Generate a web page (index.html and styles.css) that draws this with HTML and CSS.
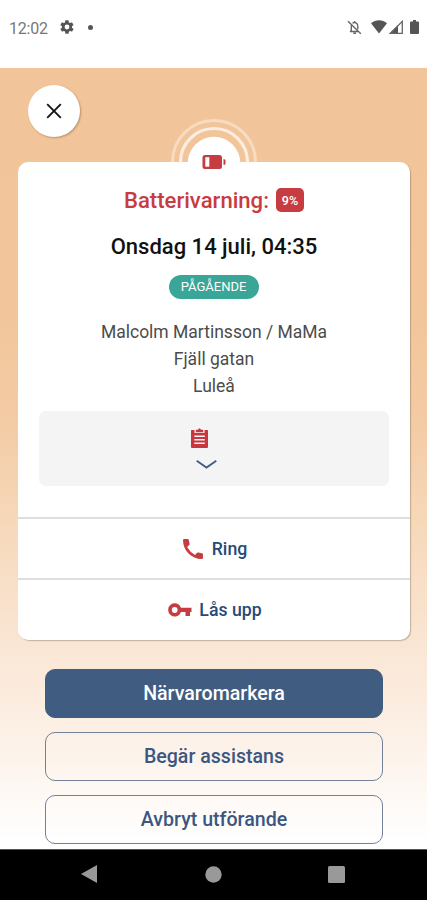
FILE: index.html
```html
<!DOCTYPE html>
<html lang="sv">
<head>
<meta charset="utf-8">
<title>Batterivarning</title>
<link rel="stylesheet" href="styles.css">
</head>
<body>
<div class="phone">
  <header class="status">
    <span class="clock">12:02</span>
    <svg class="gear" width="16" height="16" viewBox="0 0 24 24"><path fill="#555" fill-rule="evenodd" d="M19.4 13c0-.3.1-.6.1-1s0-.7-.1-1l2.100-1.600c.2-.2.300-.4.100-.7l-2-3.400c-.1-.2-.4-.3-.6-.2l-2.500 1c-.5-.4-1.100-.7-1.700-1l-.4-2.600c0-.3-.2-.5-.5-.5h-4c-.2 0-.4.200-.5.500l-.4 2.600c-.6.300-1.200.600-1.700 1l-2.500-1c-.2-.1-.5 0-.6.200l-2 3.400c-.1.200-.1.500.1.700L4.500 11c0 .3-.1.700-.1 1s0 .700.1 1l-2.100 1.600c-.2.200-.3.400-.1.700l2 3.400c.1.200.4.300.6.200l2.500-1c.5.400 1.100.700 1.700 1l.4 2.600c0 .300.200.500.5.500h4c.200 0 .500-.2.500-.5l.4-2.600c.6-.3 1.200-.6 1.700-1l2.500 1c.200.100.500 0 .6-.2l2-3.400c.1-.2.100-.5-.1-.7zM12 15.600a3.600 3.600 0 1 1 0-7.200 3.600 3.600 0 0 1 0 7.200z"/></svg>
    <span class="dot"></span>
    <svg class="bell" width="15" height="15" viewBox="0 0 15 15" fill="none" stroke="#666" stroke-width="1.400"><path d="M1 1.200 13.800 13.700M4.300 5.200V10.800L3 11.500H10.800M5.500 3.300C7.500 1.700 10.800 3 10.800 6.200V9.200M7.600 1v1.500M6.300 13.200H9"/></svg>
    <svg class="wifi" width="16" height="14" viewBox="0 0 16 14"><path fill="#555" d="M0 3.200C4.500-.7 11.500-.7 16 3.200L8 13.500z"/></svg>
    <svg class="signal" width="14" height="14" viewBox="0 0 14 14"><path fill="#555" d="M0 14 9 5V14z"/><path fill="none" stroke="#666" stroke-width="1.300" d="M1.200 13.500 13.300 1.400V13.500z"/></svg>
    <svg class="cell" width="9" height="14" viewBox="0 0 9 14"><path fill="#555" d="M3 0h3v1.500h2q1 0 1 1V13q0 1-1 1H1q-1 0-1-1V2.500q0-1 1-1h2z"/></svg>
  </header>

  <main class="screen">
    <button class="close" aria-label="Stäng"><svg width="16" height="16" viewBox="0 0 16 16"><path d="M1.200 1.200 14.800 14.800M14.800 1.200 1.200 14.800" stroke="#151515" stroke-width="1.900"/></svg></button>

    <section class="card">
      <svg class="rings" width="90" height="58" viewBox="0 0 90 58">
        <g fill="none" stroke="#fff"><path d="M3.500 44a41.500 41.500 0 0 1 83 0" stroke-width="3" opacity=".4"/><path d="M11.500 44a33.500 33.500 0 0 1 67 0" stroke-width="3.200" opacity=".7"/></g>
        <path d="M18.700 45a26.300 26.300 0 0 1 52.600 0z" fill="#fff"/>
        <rect x="33.500" y="37" width="19.500" height="14" rx="2.500" fill="#c73c41"/>
        <rect x="36.300" y="39.200" width="4" height="9.500" fill="#fff"/>
        <path d="M54.500 41q2 0 2 1.500v3q0 1.500-2 1.500z" fill="#c73c41"/>
      </svg>
      <h1 class="alert"><span class="alert-text">Batterivarning:</span><span class="level">9%</span></h1>
      <h2 class="date">Onsdag 14 juli, 04:35</h2>
      <span class="state">PÅGÅENDE</span>
      <address class="person">Malcolm Martinsson / MaMa<br>Fjäll gatan<br>Luleå</address>
      <div class="notes">
        <svg class="clipboard" width="17" height="20" viewBox="0 0 17 20"><path fill="#c9363e" d="M0 2.500q0-.5.500-.5H3.500V5H13.500V2h3q.5 0 .5.500V19q0 1-1 1H1q-1 0-1-1z"/><path fill="#c9363e" d="M4.800 4.200V1.800H7Q8.500-1.200 10 1.800H12.200V4.200z"/><path stroke="#f4f4f4" stroke-width="1.400" d="M3.300 8.300h10.500M3.300 11.800h10.500M3.300 15.300h10.500"/></svg>
        <svg class="chevron" width="21" height="9" viewBox="0 0 21 9"><path fill="none" stroke="#405c84" stroke-width="1.800" d="M.7 .8 10.500 7.600 20.300 .8"/></svg>
      </div>
      <a class="action call"><svg width="20" height="20" viewBox="0 0 20 20"><path fill="#c73c41" d="M0 1.200Q0 0 1.200 0H4.600Q5.600 0 5.800 1L6.600 4.700Q6.700 5.500 6.200 6L4.100 8Q7 13.200 12 15.900L14 13.800Q14.500 13.300 15.300 13.400L19 14.200Q20 14.400 20 15.400V18.800Q20 20 18.800 20C8.500 20 0 11.500 0 1.200z"/></svg>Ring</a>
      <a class="action unlock"><svg width="24" height="14" viewBox="0 0 24 14"><path fill="#c73c41" fill-rule="evenodd" d="M13 4.800H23.500V9H22V13H17.500V9H13A6.600 6.600 0 1 1 13 4.800zM6.700 4.100a2.900 2.900 0 1 0 0 5.800 2.900 2.900 0 0 0 0-5.800z"/></svg>Lås upp</a>
    </section>

    <div class="buttons">
      <button class="btn primary">Närvaromarkera</button>
      <button class="btn">Begär assistans</button>
      <button class="btn">Avbryt utförande</button>
    </div>
  </main>

  <nav class="navbar">
    <svg width="17" height="18" viewBox="0 0 17 18"><path fill="#999" d="M0 9 16 0V18z"/></svg>
    <svg width="17" height="17" viewBox="0 0 17 17"><circle cx="8.500" cy="8.500" r="8.200" fill="#999"/></svg>
    <svg width="17" height="17" viewBox="0 0 17 17"><rect width="17" height="17" rx="1.500" fill="#999"/></svg>
  </nav>
</div>
</body>
</html>
```
FILE: styles.css
```css
* { box-sizing: border-box; }
body { margin: 0; font-family: Roboto, sans-serif; background: #fff; }
svg { display: block; flex: none; }
button { font-family: inherit; padding: 0; }

.phone { width: 427px; height: 900px; display: flex; flex-direction: column; overflow: hidden; }

.status { height: 68px; padding: 0 8px 14px 9px; display: flex; align-items: center; color: #777; }
.clock { font-size: 16px; width: 40px; padding-top: 2px; letter-spacing: -.2px; }
.gear { margin-left: 10px; }
.dot { width: 5px; height: 5px; border-radius: 50%; background: #555; margin-left: 13px; }
.bell { margin-left: auto; }
.wifi { margin-left: 9px; }
.signal { margin-left: 2px; }
.cell { margin-left: 7px; }

.screen { height: 781px; padding-top: 17px; background: linear-gradient(#f2c499 0, #f2c59b 30%, #f3cba4 45%, #f6d8b9 58%, #f9e4d1 72%, #fcefe4 84%, #fff 99%); }
.close { display: flex; align-items: center; justify-content: center; width: 52px; height: 52px; margin: 0 0 25px 28px; border: 0; border-radius: 50%; background: #fff; box-shadow: 1px 1px 2px rgba(100, 70, 40, .4); }

.card { position: relative; width: 392px; height: 478px; margin: 0 0 29px 18px; display: flex; flex-direction: column; align-items: center; background: #fff; border-radius: 10px; box-shadow: 1px 1px 1px rgba(100, 80, 60, .35); }
.rings { position: absolute; top: -44px; left: 151px; }
.alert { display: flex; align-items: center; gap: 7px; height: 26px; margin: 25px 0 0; font-size: 22.100px; font-weight: 500; color: #c73c41; }
.level { width: 28px; height: 24px; border-radius: 5px; background: #c73c41; color: #fff; font-size: 12.500px; line-height: 25px; text-align: center; }
.date { margin: 21px 0 0; height: 26px; line-height: 26px; font-size: 22px; font-weight: 500; color: #111; }
.state { width: 90px; height: 24px; margin: 15px 1px 0 0; border-radius: 12px; background: #39a698; color: #fff; font-size: 13px; line-height: 24px; text-align: center; }
.person { margin-top: 20px; font-size: 17.500px; line-height: 27px; font-style: normal; text-align: center; color: #4c4c4c; }
.notes { width: 350px; height: 75px; margin: 11px 0 31px; padding: 17px 15px 0 0; display: flex; flex-direction: column; align-items: center; gap: 12px; border-radius: 7px; background: #f4f4f4; }
.clipboard { margin-right: 15px; }
.action { width: 100%; height: 61px; padding-left: 2px; display: flex; align-items: center; justify-content: center; gap: 9px; border-top: 2px solid #dedede; color: #284a78; font-size: 17.700px; font-weight: 500; }
.unlock { gap: 7px; }

.buttons { width: 338px; margin-left: 45px; display: flex; flex-direction: column; gap: 14px; }
.btn { height: 49px; border: 1px solid #73819b; border-radius: 10px; background: transparent; color: #3b5781; font-size: 19.600px; font-weight: 500; }
.primary { border-color: #405c80; background: #405c80; color: #fff; }

.navbar { height: 51px; padding: 0 82px 2px 81px; display: flex; align-items: center; justify-content: space-between; background: #000; border-top: 1px solid #555; }
```
